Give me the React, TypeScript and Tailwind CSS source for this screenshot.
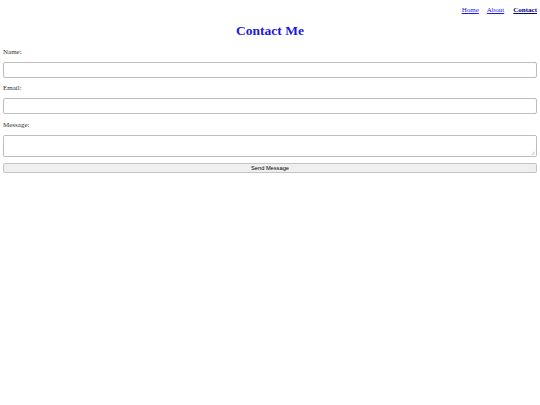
import React from "react";

export default function App() {
  return (
    <div className="w-[540px] h-[405px] bg-white text-black font-['Liberation_Serif',serif]">
      <nav className="flex justify-end gap-[8px] pr-[3px] pt-[6px] text-[7px] leading-[8px]">
        <a href="#" className="underline text-[#1a1aee]">Home</a>
        <a href="#" className="underline text-[#1a1aee]">About</a>
        <a href="#" className="underline font-bold text-[#000080] ml-[1px]">Contact</a>
      </nav>
      <h1 className="mt-[9px] text-center text-[13.5px] leading-[16px] font-bold text-[#1a1ad6]">
        Contact Me
      </h1>
      <form className="px-[3px] flex flex-col" onSubmit={(e) => e.preventDefault()}>
        <label className="mt-[9px] text-[7px] leading-[8px] text-[#333]">Name:</label>
        <input
          type="text"
          className="mt-[6px] h-[16px] w-full border border-[#bdbdbd] rounded-[2px] bg-white outline-none"
        />
        <label className="mt-[6px] text-[7px] leading-[8px] text-[#333]">Email:</label>
        <input
          type="email"
          className="mt-[6px] h-[16px] w-full border border-[#bdbdbd] rounded-[2px] bg-white outline-none"
        />
        <label className="mt-[7px] text-[7px] leading-[8px] text-[#333]">Message:</label>
        <div className="relative mt-[6px] h-[22px]">
          <textarea className="block h-[22px] w-full resize-none border border-[#bdbdbd] rounded-[2px] bg-white outline-none" />
          <svg
            className="absolute right-[2px] bottom-[2px]"
            width="4"
            height="4"
            viewBox="0 0 4 4"
          >
            <line x1="0.5" y1="4" x2="4" y2="0.5" stroke="#a0a0a0" strokeWidth="0.6" />
            <line x1="2.3" y1="4" x2="4" y2="2.3" stroke="#a0a0a0" strokeWidth="0.6" />
          </svg>
        </div>
        <button
          type="submit"
          className="mt-[6px] h-[10px] w-full border border-[#c4c4c4] rounded-[2px] bg-[#efefef] text-[5.7px] leading-[8px] font-['Liberation_Sans',sans-serif] text-black"
        >
          Send Message
        </button>
      </form>
    </div>
  );
}
